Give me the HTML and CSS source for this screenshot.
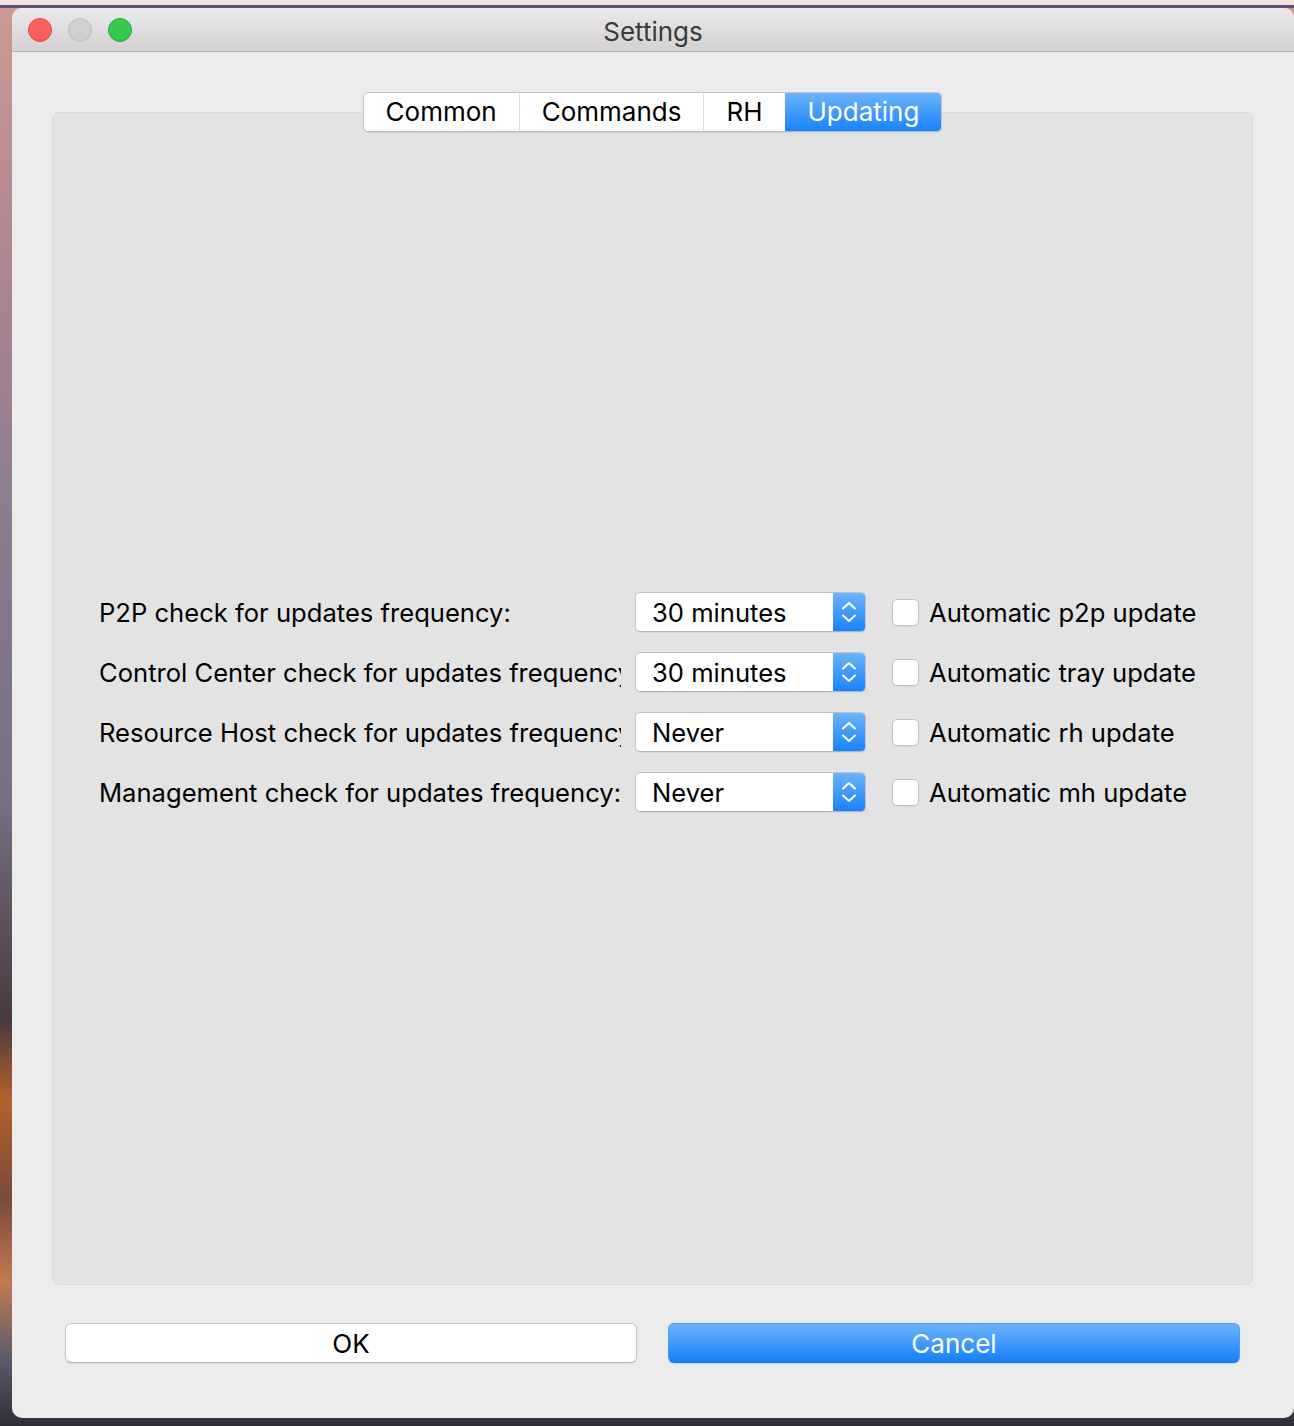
FILE: index.html
```html
<!DOCTYPE html>
<html>
<head>
<meta charset="utf-8">
<title>Settings</title>
<link rel="stylesheet" href="styles.css">
</head>
<body>
<div class="window">
  <div class="titlebar">
    <div class="lights">
      <span class="light red"></span>
      <span class="light gray"></span>
      <span class="light green"></span>
    </div>
    <div class="title">Settings</div>
  </div>
  <div class="content">
    <div class="tabs">
      <div class="tab">Common</div>
      <div class="tab">Commands</div>
      <div class="tab">RH</div>
      <div class="tab active">Updating</div>
    </div>
    <div class="panel">
      <div class="form">
        <div class="label">P2P check for updates frequency:</div>
        <div class="combo"><span class="combo-text">30 minutes</span><span class="combo-arrow"><svg width="16" height="22" viewBox="0 0 16 22"><path d="M2 7.5 L8 2 L14 7.5 M2 14.5 L8 20 L14 14.5" fill="none" stroke="#fff" stroke-width="2" stroke-linecap="round" stroke-linejoin="round"/></svg></span></div>
        <label class="check"><span class="box"></span><span>Automatic p2p update</span></label>

        <div class="label">Control Center check for updates frequency:</div>
        <div class="combo"><span class="combo-text">30 minutes</span><span class="combo-arrow"><svg width="16" height="22" viewBox="0 0 16 22"><path d="M2 7.5 L8 2 L14 7.5 M2 14.5 L8 20 L14 14.5" fill="none" stroke="#fff" stroke-width="2" stroke-linecap="round" stroke-linejoin="round"/></svg></span></div>
        <label class="check"><span class="box"></span><span>Automatic tray update</span></label>

        <div class="label">Resource Host check for updates frequency:</div>
        <div class="combo"><span class="combo-text">Never</span><span class="combo-arrow"><svg width="16" height="22" viewBox="0 0 16 22"><path d="M2 7.5 L8 2 L14 7.5 M2 14.5 L8 20 L14 14.5" fill="none" stroke="#fff" stroke-width="2" stroke-linecap="round" stroke-linejoin="round"/></svg></span></div>
        <label class="check"><span class="box"></span><span>Automatic rh update</span></label>

        <div class="label">Management check for updates frequency:</div>
        <div class="combo"><span class="combo-text">Never</span><span class="combo-arrow"><svg width="16" height="22" viewBox="0 0 16 22"><path d="M2 7.5 L8 2 L14 7.5 M2 14.5 L8 20 L14 14.5" fill="none" stroke="#fff" stroke-width="2" stroke-linecap="round" stroke-linejoin="round"/></svg></span></div>
        <label class="check"><span class="box"></span><span>Automatic mh update</span></label>
      </div>
    </div>
    <div class="buttons">
      <button class="btn">OK</button>
      <button class="btn primary">Cancel</button>
    </div>
  </div>
</div>
</body>
</html>
```
FILE: styles.css
```css
html, body {
  margin: 0;
  padding: 0;
}
body {
  width: 1294px;
  height: 1426px;
  overflow: hidden;
  font-family: Inter, "Liberation Sans", Arial, sans-serif;
  background:
    linear-gradient(to bottom, #f5e2e2 0, #f5e2e2 5px, #5c5472 5px, #5c5472 8px, transparent 8px),
    linear-gradient(to bottom, #cf9a94 0, #b08690 250px, #8d7c92 500px, #786f86 800px, #4a3a3e 1020px, #b4602e 1100px, #7a4a3a 1200px, #c27a50 1280px, #5a5a6c 1360px, #2e2e3a 1426px);
}
.window {
  margin: 8px 0 0 12px;
  width: 1282px;
  height: 1410px;
  background: #ececec;
  border-radius: 10px;
  overflow: hidden;
  display: flex;
  flex-direction: column;
}
.titlebar {
  height: 43px;
  border-bottom: 1px solid #b3b1b3;
  background: linear-gradient(to bottom, #ebe9eb, #d3d1d3);
  display: flex;
  align-items: center;
  position: relative;
  flex: none;
}
.lights {
  display: flex;
  gap: 16px;
  padding-left: 16px;
}
.light {
  width: 22px;
  height: 22px;
  border-radius: 50%;
  border: 1px solid;
  box-sizing: content-box;
}
.red { background: #fc605b; border-color: #de4a45; }
.gray { background: #d1d0d1; border-color: #bdbcbd; }
.green { background: #35c84a; border-color: #2aac39; }
.title {
  position: absolute;
  left: 0;
  right: 0;
  text-align: center;
  font-size: 26px;
  color: #3a3a3a;
  top: 8px;
}
.content {
  flex: 1;
  padding: 40px 41px 0 40px;
  display: flex;
  flex-direction: column;
}
.tabs {
  display: flex;
  align-self: center;
  height: 38px;
  border: 1px solid #c6c6c6;
  border-bottom-color: #b8b8b8;
  border-radius: 5px;
  background: #fff;
  margin-bottom: -20px;
  position: relative;
  z-index: 1;
  overflow: hidden;
  box-shadow: 0 1px 1px rgba(0,0,0,0.08);
}
.tab {
  padding: 0 22px;
  font-size: 26px;
  line-height: 38px;
  color: #000;
  border-left: 1px solid #dcdcdc;
}
.tab:first-child { border-left: none; }
.tab.active {
  color: #fff;
  border-left-color: transparent;
  background: linear-gradient(to bottom, #6cb4fb, #1882fb);
}
.panel {
  background: #e3e3e3;
  border: 1px solid #d9d9d9;
  border-radius: 7px;
  padding: 479px 0 0 46px;
  box-sizing: border-box;
  height: 1173px;
}
.form {
  display: grid;
  grid-template-columns: 522px 231px auto;
  grid-auto-rows: 40px;
  column-gap: 14px;
  row-gap: 20px;
  align-items: center;
  font-size: 25.6px;
  color: #000;
}
.label {
  white-space: nowrap;
  overflow: hidden;
}
.combo {
  height: 38px;
  border: 1px solid #c4c4c4;
  border-bottom-color: #b5b5b5;
  border-radius: 5px;
  background: #fff;
  display: flex;
  align-items: center;
  overflow: hidden;
  box-shadow: 0 1px 1px rgba(0,0,0,0.06);
}
.combo-text {
  flex: 1;
  padding-left: 16px;
}
.combo-arrow {
  width: 32px;
  height: 100%;
  background: linear-gradient(to bottom, #6cb4fb, #1882fb);
  display: flex;
  align-items: center;
  justify-content: center;
}
.check {
  display: flex;
  align-items: center;
  gap: 10px;
  margin-left: 12px;
}
.box {
  width: 25px;
  height: 25px;
  border: 1px solid #c2c2c2;
  border-radius: 5px;
  background: #fff;
  box-shadow: 0 1px 1px rgba(0,0,0,0.05);
}
.buttons {
  display: flex;
  gap: 31px;
  margin-top: 38px;
  padding: 0 13px;
}
.btn {
  flex: 1;
  height: 40px;
  font-family: inherit;
  font-size: 26px;
  color: #000;
  background: #fff;
  border: 1px solid #c6c6c6;
  border-bottom-color: #b3b3b3;
  border-radius: 6px;
  padding: 0;
  box-shadow: 0 1px 1px rgba(0,0,0,0.08);
}
.btn.primary {
  color: #fff;
  border-color: #4b9bf9;
  border-bottom-color: #1478f0;
  background: linear-gradient(to bottom, #6cb4fb, #1580fa);
}
```
